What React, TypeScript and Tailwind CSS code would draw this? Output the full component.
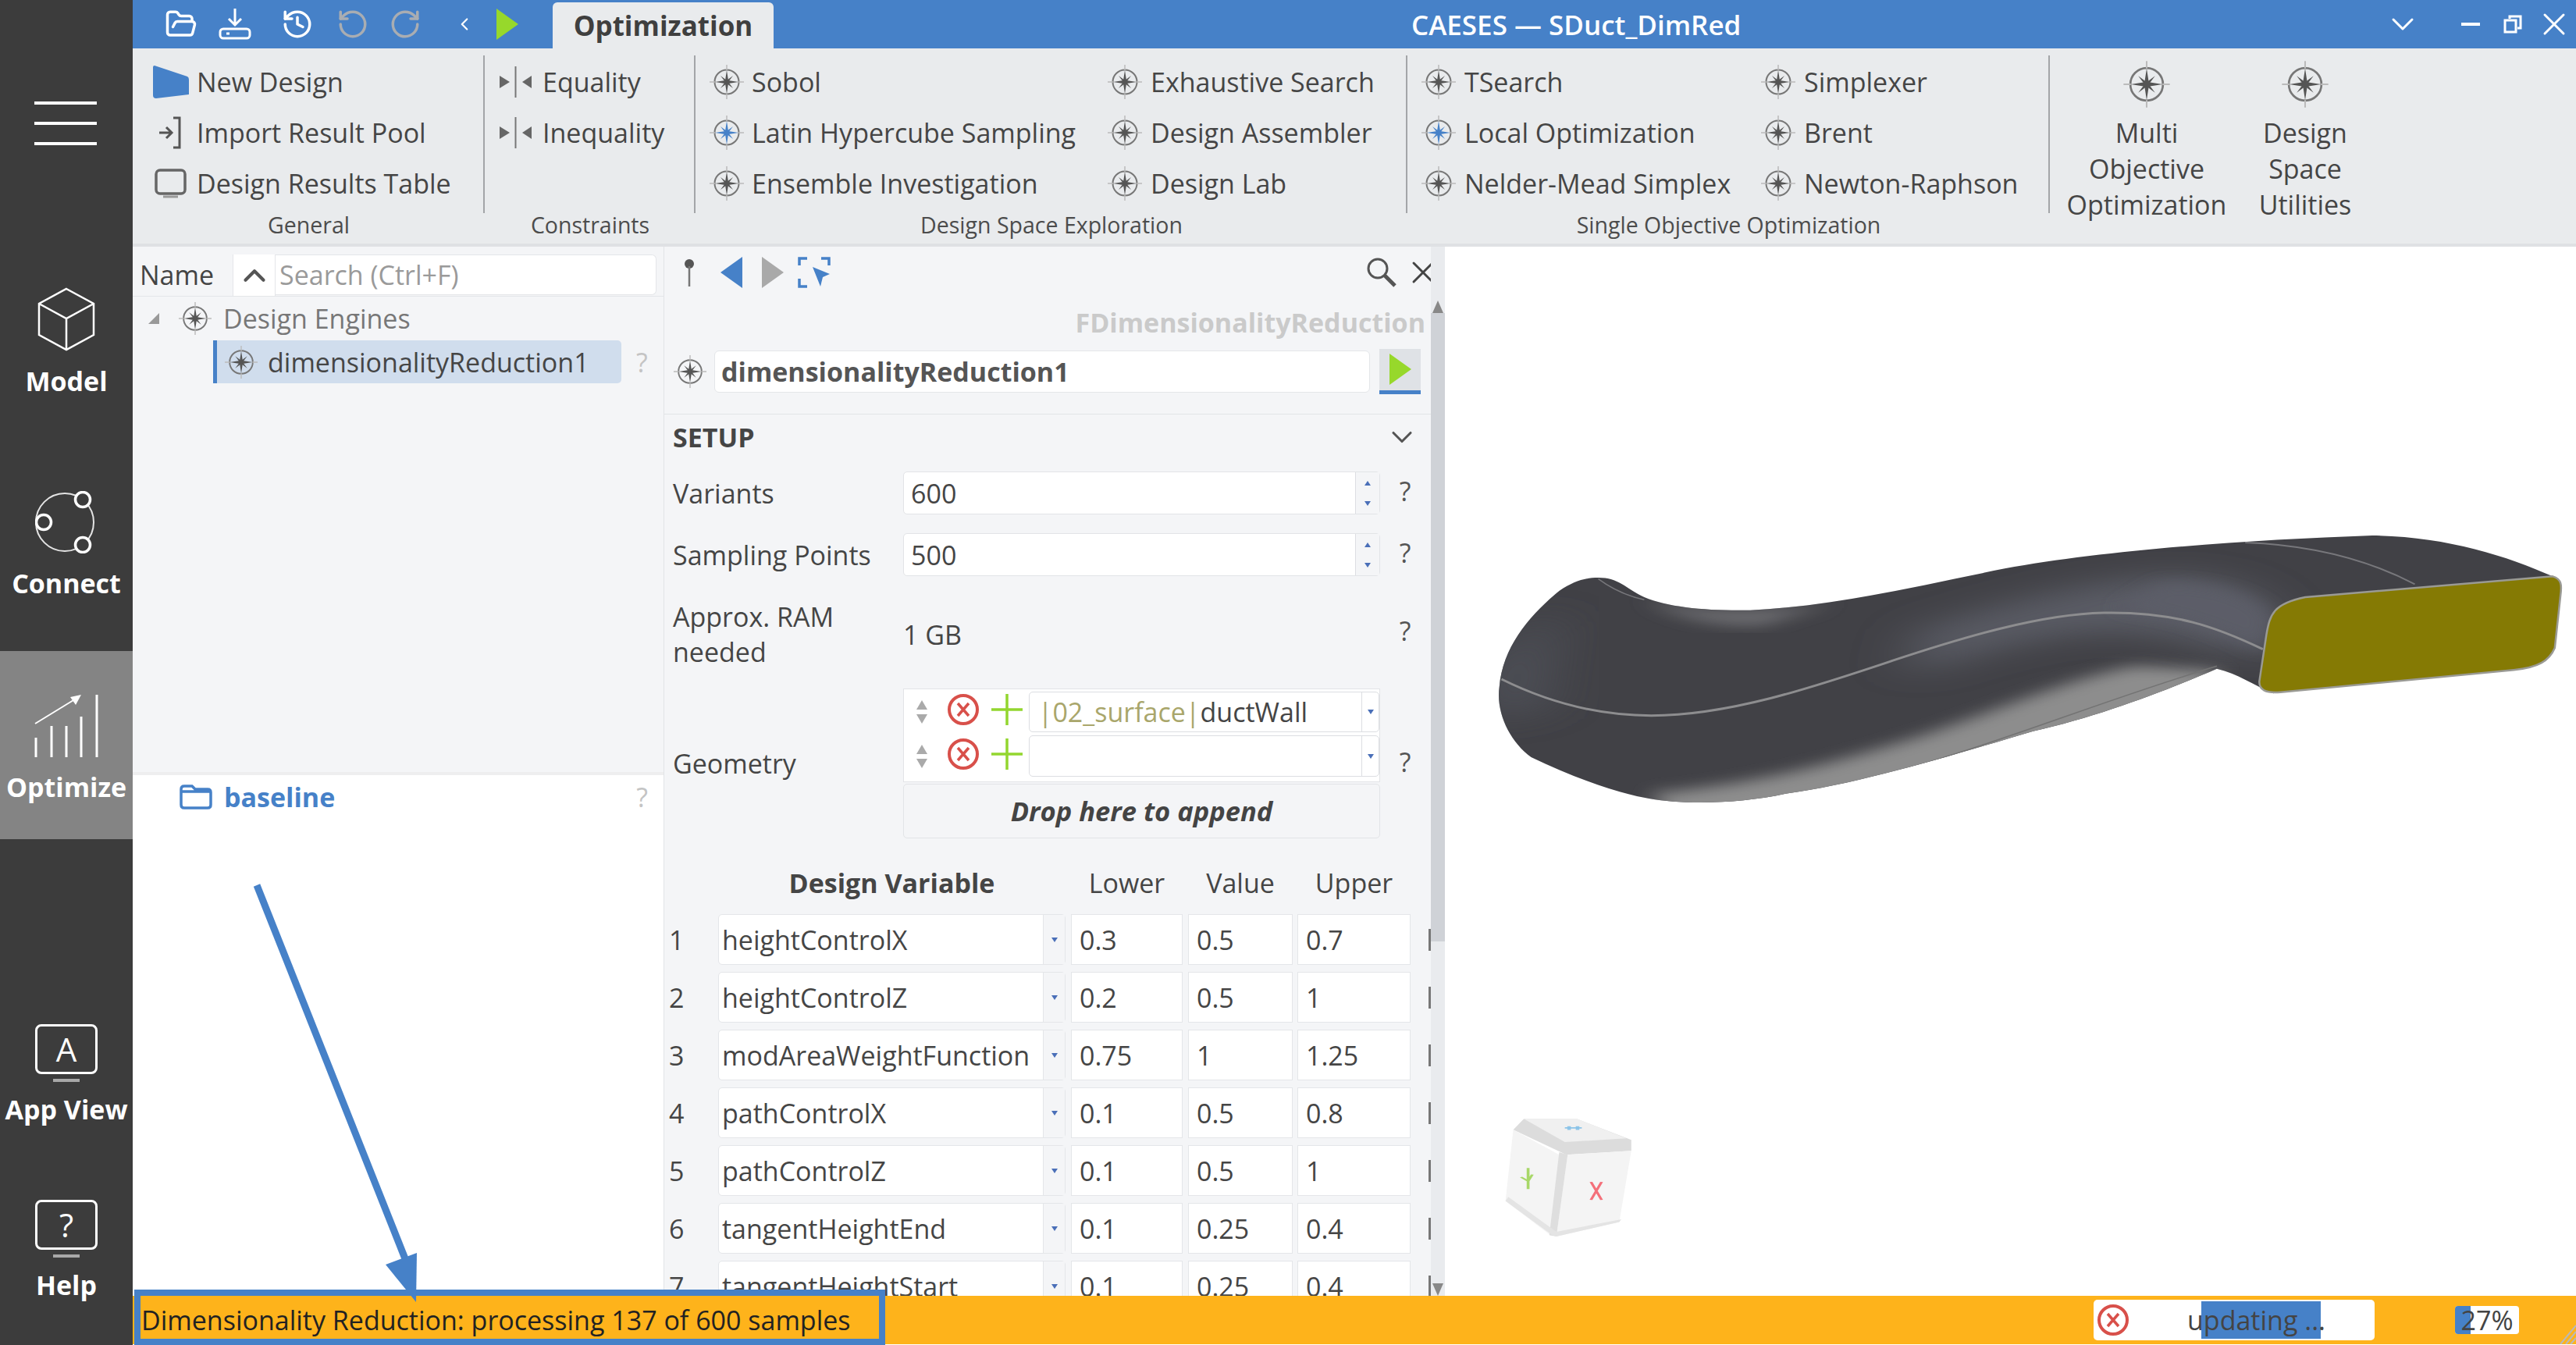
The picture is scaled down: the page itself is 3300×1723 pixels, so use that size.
import { FolderOpen, History, RotateCcw, RotateCw, X, ChevronDown, ChevronUp, ChevronLeft } from "lucide-react";
import type { ReactNode } from "react";

function Compass({ size = 46, blue = false }: { size?: number; blue?: boolean }) {
  const star = blue ? "#4681c8" : "#555";
  return (
    <svg width={size} height={size} viewBox="-23 -23 46 46" className="shrink-0">
      <circle r="15.5" fill="none" stroke="#777" strokeWidth="2" />
      <path d="M0 -22V-15M0 22V15M-22 0H-15M22 0H15" stroke="#bbb" strokeWidth="1.5" />
      <path d="M0 -15L2 -2L15 0L2 2L0 15L-2 2L-15 0L-2 -2Z" fill={star} />
      <path d="M-8 -8L0 -2L8 -8L2 0L8 8L0 2L-8 8L-2 0Z" fill={star} />
    </svg>
  );
}

function RedX({ size = 42 }: { size?: number }) {
  return (
    <svg width={size} height={size} viewBox="0 0 42 42" className="shrink-0">
      <circle cx="21" cy="21" r="18" fill="none" stroke="#d8504a" strokeWidth="4" />
      <path d="M14 13L28 29M28 13L14 29" stroke="#d8504a" strokeWidth="3.5" />
    </svg>
  );
}

function GreenPlus() {
  return (
    <svg width="42" height="42" viewBox="0 0 42 42" className="shrink-0">
      <path d="M21 1V41M1 21H41" stroke="#93d62f" strokeWidth="3.5" />
    </svg>
  );
}

function Tri({ dir, color, w = 28, h = 40 }: { dir: "l" | "r"; color: string; w?: number; h?: number }) {
  return (
    <svg width={w} height={h} viewBox="0 0 28 40" preserveAspectRatio="none" className="shrink-0">
      <path d={dir === "r" ? "M0 0L28 20L0 40Z" : "M28 0L0 20L28 40Z"} fill={color} />
    </svg>
  );
}

function Limit() {
  return (
    <svg width="41" height="40" viewBox="0 0 41 40" className="shrink-0">
      <path d="M0 12L13 20L0 28Z" fill="#666" />
      <path d="M41 12L29 20L41 28Z" fill="#666" />
      <path d="M20.5 0V40" stroke="#777" strokeWidth="2" />
    </svg>
  );
}

function RibbonItem({ icon, box, children }: { icon: ReactNode; box: string; children?: ReactNode }) {
  return (
    <div className="flex h-[65px] items-center">
      <div className={"flex shrink-0 items-center " + box}>{icon}</div>
      <span className="whitespace-nowrap">{children}</span>
    </div>
  );
}

function RibbonGroup({ width, label, children, last }: { width: string; label: string; children: ReactNode; last?: boolean }) {
  return (
    <div className={"flex flex-col " + width}>
      <div className={"h-[202px] pt-[1px] " + (last ? "" : "border-r-2 border-[#a3a5a8]")}>{children}</div>
      <div className="flex h-[30px] items-center justify-center text-[28.5px] text-[#4c4c4c]">{label}</div>
    </div>
  );
}

function SideItem({ label, icon, className }: { label: string; icon: ReactNode; className: string }) {
  return (
    <div className={"flex w-full flex-col items-center text-[34px] font-bold text-white " + className}>
      {icon}
      <span className="whitespace-nowrap">{label}</span>
    </div>
  );
}

function Monitor({ children }: { children: ReactNode }) {
  return (
    <div className="flex flex-col items-center">
      <div className="flex h-[64px] w-[80px] items-center justify-center rounded-[8px] border-[3px] border-white text-[42px] font-normal leading-none text-white">
        {children}
      </div>
      <div className="mt-[6px] h-[4px] w-[34px] bg-[#a8a8a8]" />
    </div>
  );
}

function Spinner() {
  return (
    <div className="flex w-[31px] flex-col items-center justify-center gap-[20px] self-stretch border-l border-[#dcdee2] bg-[#f4f5f7]">
      <svg width="8" height="6" viewBox="0 0 8 6"><path d="M4 0L8 6H0Z" fill="#4a6fb8" /></svg>
      <svg width="8" height="6" viewBox="0 0 8 6"><path d="M4 6L8 0H0Z" fill="#4a6fb8" /></svg>
    </div>
  );
}

function SmallDrop() {
  return <svg width="8" height="6" viewBox="0 0 8 6" className="shrink-0"><path d="M4 6L8 0H0Z" fill="#4a6fb8" /></svg>;
}

function SortArrows() {
  return (
    <svg width="16" height="32" viewBox="0 0 16 32" className="shrink-0">
      <path d="M8 1L15 13H1Z" fill="#aaa" />
      <path d="M8 31L15 19H1Z" fill="#aaa" />
    </svg>
  );
}

function GeoRow({ children, className }: { children?: ReactNode; className: string }) {
  return (
    <div className={"flex items-center " + className}>
      <div className="flex w-[46px] justify-center"><SortArrows /></div>
      <div className="ml-[9px] flex w-[98px] items-center justify-between pb-[6px]">
        <RedX />
        <GreenPlus />
      </div>
      <div className="ml-[7px] flex h-full w-[450px] items-center rounded-[5px] border border-[#dcdee2] bg-white pl-[11px]">
        <div className="flex-1 whitespace-nowrap">{children}</div>
        <div className="flex h-full w-[22px] items-center justify-center border-l border-[#dcdee2]"><SmallDrop /></div>
      </div>
    </div>
  );
}

const rows = [
  ["1", "heightControlX", "0.3", "0.5", "0.7"],
  ["2", "heightControlZ", "0.2", "0.5", "1"],
  ["3", "modAreaWeightFunction", "0.75", "1", "1.25"],
  ["4", "pathControlX", "0.1", "0.5", "0.8"],
  ["5", "pathControlZ", "0.1", "0.5", "1"],
  ["6", "tangentHeightEnd", "0.1", "0.25", "0.4"],
  ["7", "tangentHeightStart", "0.1", "0.25", "0.4"],
];

function Cell({ width, children }: { width: string; children: ReactNode }) {
  return (
    <div className={"flex h-full items-center border border-[#e4e6e9] bg-white pl-[10px] " + width}>{children}</div>
  );
}

function Duct() {
  const body =
    "M185 300C215 300 225 345 250 375C285 415 340 428 400 425C520 410 640 330 760 265C900 195 1100 155 1280 138C1380 140 1470 215 1535 295L1140 745C1110 710 1090 670 1060 650C1000 720 900 830 800 890C700 970 560 1090 450 1130C400 1160 340 1170 290 1160C230 1150 160 1080 90 990C60 930 40 820 45 720C50 560 90 440 130 350C150 315 165 300 185 300Z";
  return (
    <svg width="1420" height="440" viewBox="0 0 1568 1320" preserveAspectRatio="none" className="absolute left-[29px] top-[324px]">
      <defs>
        <clipPath id="ductClip"><path d={body} /></clipPath>
        <filter id="soft" x="-30%" y="-30%" width="160%" height="160%"><feGaussianBlur stdDeviation="16 26" /></filter>
        <filter id="softer" x="-50%" y="-50%" width="200%" height="200%"><feGaussianBlur stdDeviation="40 50" /></filter>
      </defs>
      <path d={body} fill="#414146" />
      <g clipPath="url(#ductClip)">
        <path d="M945 640C860 680 760 800 640 910C520 1010 420 1090 260 1130L300 1260L1060 1100L1062 655Z" fill="#8d8d8d" filter="url(#soft)" />
        <path d="M640 500C760 400 860 320 980 290C1080 280 1130 360 1140 460L1120 620C1040 540 960 500 880 510C800 530 720 590 620 680Z" fill="#5a5b65" filter="url(#softer)" />
        <path d="M980 320C1060 310 1130 380 1140 460L1125 590C1060 500 1000 440 920 420Z" fill="#5c5d67" filter="url(#soft)" />
        <path d="M250 380C310 430 420 440 520 395L420 480C350 490 290 450 250 380Z" fill="#6f6f73" filter="url(#soft)" />
        <path d="M20 650C80 500 100 450 130 420L110 800L30 860Z" fill="#4e4f57" filter="url(#softer)" />
        <path d="M48 690C100 760 170 830 260 830C370 830 490 720 600 620C700 530 810 440 900 435C1000 430 1060 490 1125 575" fill="none" stroke="#8d8d8f" strokeWidth="3" vectorEffect="non-scaling-stroke" />
        <path d="M1100 165C1200 175 1280 240 1340 325" fill="none" stroke="#77777b" strokeWidth="2" vectorEffect="non-scaling-stroke" />
        <path d="M600 1050C760 930 900 770 1060 640" fill="none" stroke="#737373" strokeWidth="1.5" vectorEffect="non-scaling-stroke" />
        <path d="M185 305C205 345 225 370 250 385" fill="none" stroke="#77777b" strokeWidth="1.5" vectorEffect="non-scaling-stroke" />
      </g>
      <path d="M1535 295C1548 305 1548 330 1546 370L1538 570C1530 620 1515 645 1480 655L1150 740C1128 745 1120 730 1120 700L1130 520C1135 440 1140 400 1185 375Z" fill="#857a04" stroke="#9a9a94" strokeWidth="2.5" vectorEffect="non-scaling-stroke" />
    </svg>
  );
}

function ViewCube() {
  return (
    <svg width="172" height="154" viewBox="0 0 190 456" preserveAspectRatio="none" className="absolute left-[74px] top-[1116px]">
      <path d="M30 4H105L182 84V125L90 140L15 45Z" fill="#dcdcdc" />
      <path d="M30 4H105L175 78L88 92Z" fill="#f0f0f0" />
      <path d="M15 45L80 140L70 450L4 315Z" fill="#f4f4f4" />
      <path d="M92 140L182 125L165 395L76 450Z" fill="#f4f4f4" />
      <path d="M80 130L92 140L76 450L66 445Z" fill="#dedede" />
      <path d="M4 315L70 445L76 450L165 395L168 385L76 432L8 300Z" fill="#e4e4e4" />
      <path d="M125 243L140 311M140 243L125 311" stroke="#f4707a" strokeWidth="4" />
      <path d="M36 190V270M26 225L36 240L42 215" fill="none" stroke="#a8d868" strokeWidth="4" />
      <path d="M88 38H112M94 32V46M106 32V46" stroke="#8cc4e8" strokeWidth="5" />
    </svg>
  );
}

export default function App() {
  return (
    <div className="relative flex h-[1723px] w-[3300px] overflow-hidden bg-white font-['Open_Sans',sans-serif] text-[34px] leading-none text-[#454545]">
      {/* left nav */}
      <div className="flex w-[170px] shrink-0 flex-col bg-[#3c3c3c]">
        <div className="ml-[44px] mt-[130px] flex w-[80px] flex-col gap-[22px]">
          <div className="h-[4px] bg-white" />
          <div className="h-[4px] bg-white" />
          <div className="h-[4px] bg-white" />
        </div>
        <SideItem
          className="mt-[182px] gap-[21px]"
          label="Model"
          icon={
            <svg width="74" height="82" viewBox="0 0 74 82">
              <path d="M37 2L72 21V61L37 80L2 61V21ZM2 21L37 40L72 21M37 40V80" fill="none" stroke="#fff" strokeWidth="2.5" />
            </svg>
          }
        />
        <SideItem
          className="mt-[124px] gap-[21px]"
          label="Connect"
          icon={
            <svg width="80" height="80" viewBox="0 0 80 80">
              <circle cx="38" cy="40" r="37" fill="none" stroke="#e4e4e4" strokeWidth="2" />
              <circle cx="61" cy="11" r="9.5" fill="#3c3c3c" stroke="#fff" strokeWidth="3.5" />
              <circle cx="11" cy="40" r="9.5" fill="#3c3c3c" stroke="#fff" strokeWidth="3.5" />
              <circle cx="61" cy="69" r="9.5" fill="#3c3c3c" stroke="#fff" strokeWidth="3.5" />
            </svg>
          }
        />
        <SideItem
          className="mt-[70px] h-[241px] gap-[20px] bg-[#848484] pt-[55px]"
          label="Optimize"
          icon={
            <svg width="82" height="82" viewBox="0 0 82 82">
              <path d="M2 81V56M22 81V41M41 81V41M60 81V29M80 81V1" stroke="#fff" strokeWidth="3" />
              <path d="M1 38L50 8" stroke="#fff" strokeWidth="2" />
              <path d="M60 1L46 4L53 14Z" fill="#fff" />
            </svg>
          }
        />
        <SideItem className="mt-[237px] gap-[18px]" label="App View" icon={<Monitor>A</Monitor>} />
        <SideItem className="mt-[99px] gap-[18px]" label="Help" icon={<Monitor>?</Monitor>} />
      </div>

      <div className="flex min-w-0 flex-1 flex-col">
        {/* title bar */}
        <div className="relative flex h-[62px] shrink-0 items-center bg-[#4681c8] text-white">
          <FolderOpen className="ml-[41px] h-[42px] w-[42px]" strokeWidth={2} />
          <svg width="42" height="40" viewBox="0 0 42 40" className="ml-[27px]">
            <path d="M21 0V20M13 13L21 21L29 13" fill="none" stroke="#fff" strokeWidth="3" />
            <rect x="2" y="26" width="38" height="12" rx="4" fill="none" stroke="#fff" strokeWidth="3" />
            <path d="M10 32H14" stroke="#fff" strokeWidth="3" />
          </svg>
          <History className="ml-[38px] h-[42px] w-[42px]" strokeWidth={2} />
          <RotateCcw className="ml-[29px] h-[42px] w-[42px] text-[#a9adb2]" strokeWidth={2} />
          <RotateCw className="ml-[25px] h-[42px] w-[42px] text-[#a9adb2]" strokeWidth={2} />
          <ChevronLeft className="ml-[42px] h-[26px] w-[26px]" strokeWidth={2} />
          <div className="ml-[28px]"><Tri dir="r" color="#97d82b" h={40} /></div>
          <div className="ml-[44px] mt-[3px] flex h-[59px] w-[283px] items-center justify-center self-end rounded-t-[6px] bg-[#e9ebed] text-[35px] font-bold text-[#3f3f3f]">
            Optimization
          </div>
          <div className="ml-[817px] w-[426px] whitespace-nowrap text-[35px] font-semibold">CAESES — SDuct_DimRed</div>
          <ChevronDown className="ml-[820px] h-[48px] w-[48px] shrink-0" strokeWidth={1.5} />
          <div className="ml-[51px] h-[4px] w-[24px] shrink-0 bg-white" />
          <svg width="24" height="24" viewBox="0 0 24 24" className="ml-[30px] shrink-0">
            <path d="M8 5V2H22V17H18M2 7H16V22H2Z" fill="none" stroke="#fff" strokeWidth="3" />
          </svg>
          <X className="ml-[17px] h-[48px] w-[48px] shrink-0" strokeWidth={1.5} />
        </div>

        {/* ribbon */}
        <div className="flex h-[254px] shrink-0 border-b-4 border-[#dfe1e4] bg-[#e9ebed] pt-[9px]">
          <RibbonGroup width="w-[451px]" label="General">
            <div className="pl-[26px]">
              <RibbonItem
                box="w-[56px]"
                icon={
                  <svg width="46" height="42" viewBox="0 0 46 42">
                    <path d="M2 0L44 14Q46 15 46 18V37L4 42Q0 42 0 38V2Q0 0 2 0Z" fill="#4681c8" />
                  </svg>
                }
              >
                New Design
              </RibbonItem>
              <RibbonItem
                box="w-[56px] pl-[7px]"
                icon={
                  <svg width="30" height="42" viewBox="0 0 30 42">
                    <path d="M1 21H16M10 14L17 21L10 28" fill="none" stroke="#555" strokeWidth="3" />
                    <path d="M19 2H27V40H19" fill="none" stroke="#555" strokeWidth="3" />
                  </svg>
                }
              >
                Import Result Pool
              </RibbonItem>
              <RibbonItem
                box="w-[56px] pl-[2px]"
                icon={
                  <svg width="41" height="38" viewBox="0 0 41 38">
                    <rect x="2" y="2" width="37" height="30" rx="5" fill="none" stroke="#666" strokeWidth="3.5" />
                    <path d="M11 36H30" stroke="#999" strokeWidth="3" />
                  </svg>
                }
              >
                Design Results Table
              </RibbonItem>
            </div>
          </RibbonGroup>
          <RibbonGroup width="w-[270px]" label="Constraints">
            <div className="pl-[19px]">
              <RibbonItem box="w-[55px]" icon={<Limit />}>Equality</RibbonItem>
              <RibbonItem box="w-[55px]" icon={<Limit />}>Inequality</RibbonItem>
            </div>
          </RibbonGroup>
          <RibbonGroup width="w-[912px]" label="Design Space Exploration">
            <div className="flex pl-[17px]">
              <div className="w-[510px]">
                <RibbonItem box="w-[55px]" icon={<Compass />}>Sobol</RibbonItem>
                <RibbonItem box="w-[55px]" icon={<Compass blue />}>Latin Hypercube Sampling</RibbonItem>
                <RibbonItem box="w-[55px]" icon={<Compass />}>Ensemble Investigation</RibbonItem>
              </div>
              <div>
                <RibbonItem box="w-[56px]" icon={<Compass />}>Exhaustive Search</RibbonItem>
                <RibbonItem box="w-[56px]" icon={<Compass />}>Design Assembler</RibbonItem>
                <RibbonItem box="w-[56px]" icon={<Compass />}>Design Lab</RibbonItem>
              </div>
            </div>
          </RibbonGroup>
          <RibbonGroup width="w-[823px]" label="Single Objective Optimization">
            <div className="flex pl-[17px]">
              <div className="w-[435px]">
                <RibbonItem box="w-[56px]" icon={<Compass />}>TSearch</RibbonItem>
                <RibbonItem box="w-[56px]" icon={<Compass blue />}>Local Optimization</RibbonItem>
                <RibbonItem box="w-[56px]" icon={<Compass />}>Nelder-Mead Simplex</RibbonItem>
              </div>
              <div>
                <RibbonItem box="w-[56px]" icon={<Compass />}>Simplexer</RibbonItem>
                <RibbonItem box="w-[56px]" icon={<Compass />}>Brent</RibbonItem>
                <RibbonItem box="w-[56px]" icon={<Compass />}>Newton-Raphson</RibbonItem>
              </div>
            </div>
          </RibbonGroup>
          <div className="flex pl-[21px] text-center leading-[46px]">
            <div className="flex w-[206px] flex-col items-center">
              <div className="h-[76px] pt-[6px]"><Compass size={62} /></div>
              <span>Multi</span>
              <span>Objective</span>
              <span>Optimization</span>
            </div>
            <div className="flex w-[200px] flex-col items-center">
              <div className="h-[76px] pt-[6px]"><Compass size={62} /></div>
              <span>Design</span>
              <span>Space</span>
              <span>Utilities</span>
            </div>
          </div>
        </div>

        {/* content */}
        <div className="flex min-h-0 flex-1">
          <div className="flex w-[680px] shrink-0 flex-col">
            <div className="h-[673px] bg-[#f4f5f7]">
              <div className="flex h-[64px] items-end border-b border-[#e4e6e9]">
                <span className="ml-[9px] w-[119px] pb-[10px] text-[#444]">Name</span>
                <div className="flex h-[53px] w-[55px] items-center justify-center border-x border-[#e4e6e9] bg-white">
                  <ChevronUp className="h-[46px] w-[46px] text-[#555]" strokeWidth={2.2} />
                </div>
                <div className="mb-[1px] flex h-[52px] w-[488px] items-center rounded-r-[6px] border border-l-0 border-[#e4e6e9] bg-white pl-[5px] text-[#9a9a9a]">
                  Search (Ctrl+F)
                </div>
              </div>
              <div className="flex h-[56px] items-center pl-[20px] text-[#777]">
                <svg width="14" height="14" viewBox="0 0 14 14"><path d="M14 0V14H0Z" fill="#999" /></svg>
                <div className="ml-[24px]"><Compass size={44} /></div>
                <span className="ml-[14px]">Design Engines</span>
              </div>
              <div className="flex items-center">
                <div className="ml-[103px] flex h-[55px] w-[523px] items-center rounded-r-[5px] border-l-[5px] border-[#4681c8] bg-[#d0dded] pl-[9px] text-[#454545]">
                  <Compass size={44} />
                  <span className="ml-[12px]">dimensionalityReduction1</span>
                </div>
                <span className="ml-[19px] text-[#c4c4c4]">?</span>
              </div>
            </div>
            <div className="h-[4px] bg-[#eeeeef]" />
            <div className="flex h-[56px] items-center bg-white">
              <svg width="42" height="32" viewBox="0 0 42 32" className="ml-[60px]">
                <path d="M2 6Q2 2 6 2H16L20 6H36Q40 6 40 10V26Q40 30 36 30H6Q2 30 2 26ZM2 9H40" fill="none" stroke="#4681c8" strokeWidth="3.5" />
              </svg>
              <span className="ml-[15px] font-bold text-[#4681c8]">baseline</span>
              <span className="ml-[386px] text-[#c4c4c4]">?</span>
            </div>
          </div>

          {/* settings panel */}
          <div className="flex w-[1001px] shrink-0 overflow-hidden border-l border-[#e2e4e7] bg-[#f4f5f7]">
            <div className="w-[982px] shrink-0">
              <div className="flex h-[66px] items-center overflow-visible">
                <svg width="16" height="36" viewBox="0 0 16 36" className="ml-[24px] shrink-0">
                  <circle cx="8" cy="7" r="6" fill="#555" />
                  <path d="M8 10V36" stroke="#777" strokeWidth="2.5" />
                </svg>
                <div className="ml-[32px] shrink-0"><Tri dir="l" color="#4681c8" /></div>
                <div className="ml-[25px] shrink-0"><Tri dir="r" color="#a9a9a9" /></div>
                <svg width="42" height="40" viewBox="0 0 42 40" className="ml-[18px] shrink-0">
                  <path d="M2 11V2H12M30 2H40V11M2 28V38H12" fill="none" stroke="#4681c8" strokeWidth="3.5" />
                  <path d="M19 13L41 22L32 26L29 38Z" fill="#4681c8" />
                </svg>
                <svg width="40" height="39" viewBox="0 0 40 39" className="ml-[686px] shrink-0">
                  <circle cx="15" cy="14" r="12" fill="none" stroke="#555" strokeWidth="3" />
                  <path d="M24 23L37 36" stroke="#555" strokeWidth="5" />
                </svg>
                <X className="ml-[9px] h-[48px] w-[48px] shrink-0 text-[#444]" strokeWidth={1.5} />
              </div>
              <div className="flex h-[62px] items-center justify-end pr-[7px] font-bold text-[#cacaca]">FDimensionalityReduction</div>
              <div className="mt-[3px] flex h-[58px] items-center">
                <div className="ml-[11px] w-[53px]"><Compass size={44} /></div>
                <div className="flex h-[54px] w-[840px] items-center rounded-[6px] border border-[#e4e6e9] bg-white pl-[8px] font-bold text-[#555]">
                  dimensionalityReduction1
                </div>
                <div className="ml-[12px] flex h-[58px] w-[53px] items-start justify-center border-b-[5px] border-[#4681c8] bg-[#dfe2e6] pt-[6px]">
                  <Tri dir="r" color="#97d82b" />
                </div>
              </div>
              <div className="mt-[25px] flex h-[59px] items-center justify-between border-t border-[#e2e4e7] pl-[11px] pr-[15px]">
                <span className="font-bold">SETUP</span>
                <ChevronDown className="h-[44px] w-[44px] text-[#555]" strokeWidth={1.7} />
              </div>
              <div className="mt-[15px] flex h-[55px] items-center pl-[11px]">
                <span className="w-[295px]">Variants</span>
                <div className="flex h-full w-[611px] items-center rounded-[5px] border border-[#e2e4e7] bg-white pl-[9px]">
                  <span className="flex-1">600</span>
                  <Spinner />
                </div>
                <span className="w-[64px] pb-[6px] text-center text-[#555]">?</span>
              </div>
              <div className="mt-[24px] flex h-[55px] items-center pl-[11px]">
                <span className="w-[295px]">Sampling Points</span>
                <div className="flex h-full w-[611px] items-center rounded-[5px] border border-[#e2e4e7] bg-white pl-[9px]">
                  <span className="flex-1">500</span>
                  <Spinner />
                </div>
                <span className="w-[64px] pb-[6px] text-center text-[#555]">?</span>
              </div>
              <div className="mt-[30px] flex h-[90px] items-center pl-[11px]">
                <span className="w-[295px] leading-[45px]">Approx. RAM<br />needed</span>
                <span className="w-[611px]">1 GB</span>
                <span className="w-[64px] pb-[10px] text-center text-[#555]">?</span>
              </div>
              <div className="mt-[24px] flex items-center pl-[11px]">
                <span className="w-[295px]">Geometry</span>
                <div className="w-[611px]">
                  <div className="flex h-[120px] flex-col gap-[4px] border border-[#e2e4e7] bg-white py-[3px]">
                    <GeoRow className="h-[52px]">
                      <span className="text-[#a9a66b]">|02_surface|</span>ductWall
                    </GeoRow>
                    <GeoRow className="h-[53px]" />
                  </div>
                  <div className="mt-[2px] flex h-[70px] items-center justify-center rounded-[5px] border border-[#e2e4e7] text-[34.5px] font-bold italic text-[#444]">
                    Drop here to append
                  </div>
                </div>
                <span className="w-[64px] pb-[4px] text-center text-[#555]">?</span>
              </div>
              <div className="flex h-[96px] items-center pl-[5px] pt-[18px]">
                <span className="ml-[64px] w-[445px] text-center font-bold">Design Variable</span>
                <span className="ml-[7px] w-[143px] text-center">Lower</span>
                <span className="ml-[7px] w-[134px] text-center">Value</span>
                <span className="ml-[6px] w-[145px] text-center">Upper</span>
              </div>
              <div className="flex flex-col gap-[8px] pl-[5px]">
                {rows.map((r) => (
                  <div key={r[0]} className="flex h-[66px] shrink-0 items-center pt-[1px]">
                    <span className="w-[64px] pl-[1px]">{r[0]}</span>
                    <div className="flex h-full w-[445px] items-center rounded-[5px] border border-[#e4e6e9] bg-white pl-[4px]">
                      <span className="flex-1 whitespace-nowrap">{r[1]}</span>
                      <div className="flex h-full w-[28px] items-center justify-center border-l border-[#e4e6e9] bg-[#f4f5f7]"><SmallDrop /></div>
                    </div>
                    <div className="ml-[7px] h-full"><Cell width="w-[143px]">{r[2]}</Cell></div>
                    <div className="ml-[7px] h-full"><Cell width="w-[134px]">{r[3]}</Cell></div>
                    <div className="ml-[6px] h-full"><Cell width="w-[145px]">{r[4]}</Cell></div>
                    <div className="ml-[23px] h-[28px] w-[3px] bg-[#777]" />
                  </div>
                ))}
              </div>
            </div>
            <div className="flex w-[18px] shrink-0 flex-col items-center bg-[#e9ebee]">
              <svg width="14" height="16" viewBox="0 0 14 16" className="mt-[69px] shrink-0"><path d="M7 0L14 16H0Z" fill="#888" /></svg>
              <div className="h-[821px] w-full bg-[#cfd2d7]" />
              <svg width="14" height="16" viewBox="0 0 14 16" className="mt-[438px] shrink-0"><path d="M7 16L14 0H0Z" fill="#888" /></svg>
            </div>
          </div>

          {/* 3d viewport */}
          <div className="relative flex-1 bg-white">
            <Duct />
            <ViewCube />
          </div>
        </div>

        {/* status bar */}
        <div className="relative mb-[1px] flex h-[62px] shrink-0 items-center bg-[#feb31b] text-[#222]">
          <span className="ml-[11px] whitespace-nowrap">Dimensionality Reduction: processing 137 of 600 samples</span>
          <div className="relative ml-auto flex h-[52px] w-[360px] items-center overflow-hidden rounded-[5px] bg-white pl-[4px] text-[#444]">
            <div className="absolute bottom-[2px] left-[138px] top-[2px] w-[153px] bg-[#4681c8]" />
            <div className="relative"><RedX /></div>
            <span className="relative ml-[74px] whitespace-nowrap">updating ...</span>
          </div>
          <div className="relative ml-[103px] mr-[73px] flex h-[36px] w-[82px] items-center justify-center overflow-hidden rounded-[4px] bg-white text-[#444]">
            <div className="absolute bottom-0 left-0 top-0 w-[20px] bg-[#4681c8]" />
            <span className="relative">27%</span>
          </div>
          <svg width="22" height="26" viewBox="0 0 22 26" className="absolute bottom-0 right-0">
            <path d="M22 2L2 26M22 10L9 26M22 18L15 26" stroke="#b9b9b9" strokeWidth="2" />
          </svg>
        </div>
      </div>

      {/* annotation over the status bar */}
      <div className="pointer-events-none absolute left-[172px] top-[1652px] h-[71px] w-[962px] border-8 border-[#4681c8]" />
      <svg width="260" height="560" viewBox="0 0 260 560" className="pointer-events-none absolute left-[300px] top-[1120px]">
        <path d="M29 14L222 500" stroke="#4681c8" strokeWidth="9" />
        <path d="M194 500L234 485L233 548Z" fill="#4681c8" />
      </svg>
    </div>
  );
}
